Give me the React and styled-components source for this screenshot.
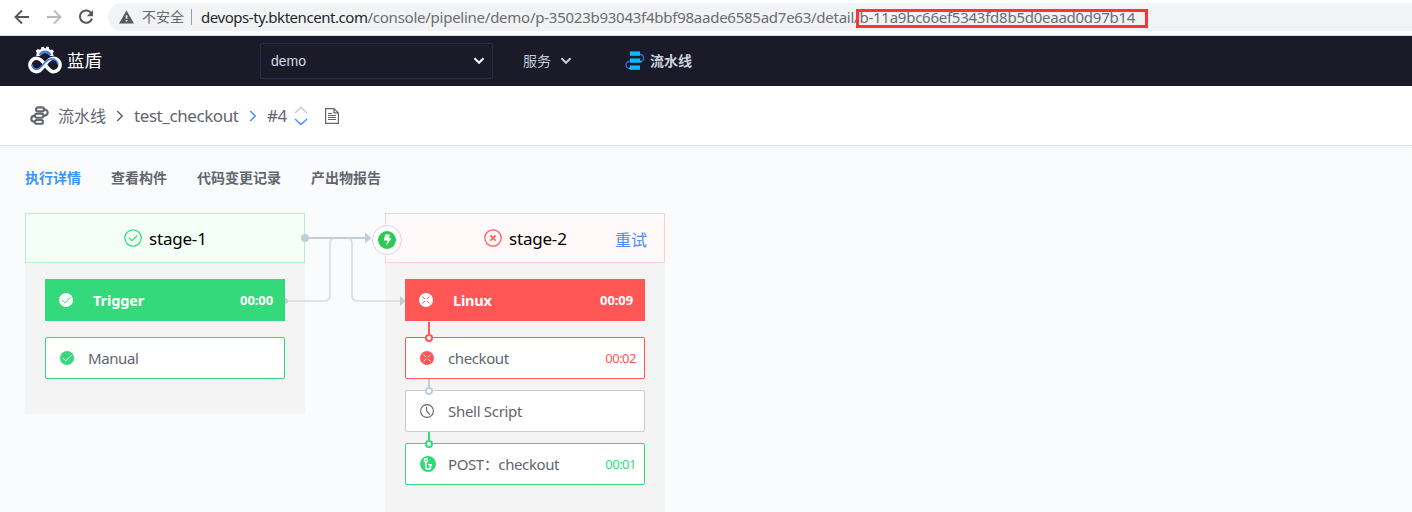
import React from "react";
import styled, { createGlobalStyle } from "styled-components";

const GREEN = "#34d97b";
const RED = "#ff5656";
const GREY = "#c3cdd7";

const Global = createGlobalStyle`
  *, *::before, *::after { box-sizing: border-box; }
  body {
    margin: 0;
    background: #fafbfd;
    overflow: hidden;
    font-family: "Noto Sans", "Noto Sans CJK SC", sans-serif;
    color: #63656e;
  }
`;

const Page = styled.div`
  width: 1412px;
  height: 512px;
  overflow: hidden;
`;

const Label = styled.span`
  font-size: ${(p) => p.$size || 14}px;
  font-weight: ${(p) => p.$weight || 400};
  letter-spacing: ${(p) => p.$track || 0}px;
  color: ${(p) => p.$color || "inherit"};
  line-height: 20px;
  white-space: nowrap;
`;

const BrowserBar = styled.div`
  display: flex;
  align-items: center;
  height: 36px;
  padding: 0 0 2px 14px;
  background: #fff;
  border-bottom: 1px solid #dcdde1;
`;

const BrowserButtons = styled.div`
  display: flex;
  gap: 16px;
  width: 94px;
`;

const Omnibox = styled.div`
  display: flex;
  flex: 1;
  align-items: center;
  height: 28px;
  padding-left: 11px;
  border-radius: 14px 0 0 14px;
  background: #f1f3f4;
`;

const Insecure = styled(Label)`
  width: 49px;
  margin-left: 8px;
`;

const Divider = styled.i`
  width: 1px;
  height: 16px;
  margin-right: 9px;
  background: #9b9da1;
`;

const Address = styled(Label)`
  color: #6b6d71;
  b {
    font-weight: 400;
    letter-spacing: -0.45px;
    color: #25272b;
  }
`;

const Highlight = styled.span`
  position: relative;
  &::after {
    content: "";
    position: absolute;
    left: -3px;
    top: 2px;
    width: 292px;
    height: 19px;
    border: 3px solid #f93535;
  }
`;

const NavBar = styled.header`
  display: flex;
  align-items: center;
  height: 50px;
  padding-left: 28px;
  background: #1b1a29;
`;

const Brand = styled.div`
  display: flex;
  align-items: center;
  gap: 5px;
  width: 232px;
  padding-bottom: 2px;
`;

const ProjectSelect = styled.div`
  display: flex;
  align-items: center;
  justify-content: space-between;
  width: 233px;
  height: 36px;
  padding: 0 7px 0 10px;
  border: 1px solid #2c2b45;
  border-radius: 2px;
  color: #d3d9e4;
  font-family: "Liberation Sans", sans-serif;
`;

const NavMenu = styled.div`
  display: flex;
  align-items: center;
  gap: 9px;
  width: 102px;
  margin-left: 30px;
  color: #c3cdd7;
`;

const NavProduct = styled.div`
  display: flex;
  align-items: center;
  gap: 5px;
  color: #c9d1dc;
`;

const Crumbs = styled.nav`
  display: flex;
  align-items: center;
  height: 60px;
  padding-left: 30px;
  background: #fff;
  border-bottom: 1px solid #dde0e7;
  box-shadow: 0 1px 4px rgba(50, 60, 90, 0.06);
`;

const CrumbText = styled(Label)`
  width: ${(p) => p.$w}px;
  margin-left: ${(p) => p.$gap}px;
`;

const CrumbArrow = styled.svg`
  width: 8px;
  height: 12px;
  margin-left: 10px;
`;

const Tabs = styled.div`
  display: flex;
  gap: 30px;
  height: 67px;
  padding: 22px 0 0 25px;
`;

const Tab = styled(Label)`
  font-weight: 700;
  color: ${(p) => (p.$active ? "#3a96ff" : "#63656e")};
`;

const Stages = styled.main`
  display: flex;
  align-items: flex-start;
  gap: 80px;
  padding-left: 25px;
`;

const Stage = styled.section`
  position: relative;
  width: 280px;
  height: ${(p) => p.$height}px;
  border-radius: 2px;
  background: #f4f4f4;
`;

const StageHead = styled.div`
  display: grid;
  grid-template-columns: 98px 1fr auto;
  align-items: center;
  height: 50px;
  padding-right: 17px;
  border: 1px solid ${(p) => (p.$failed ? "#ffcfcf" : "#b4efc9")};
  background: ${(p) => (p.$failed ? "#fff9f9" : "#f3fff7")};
`;

const StageTitle = styled.div`
  display: flex;
  grid-column: 2;
  align-items: center;
  gap: 7px;
`;

const StageName = styled(Label)`
  padding-top: 1px;
  color: #000;
`;

const Retry = styled(Label)`
  padding-top: 3px;
  color: #4a8cff;
`;

const StageBody = styled.div`
  display: flex;
  flex-direction: column;
  padding: 16px 20px;
`;

const Job = styled.div`
  display: flex;
  align-items: center;
  height: 42px;
  margin-bottom: 16px;
  padding: 0 12px 0 14px;
  background: ${(p) => p.$color};
  color: #fff;
`;

const Step = styled.div`
  position: relative;
  display: flex;
  align-items: center;
  height: 42px;
  margin-bottom: 11px;
  padding: 0 8px 0 14px;
  border: 1px solid ${(p) => p.$color};
  border-radius: 2px;
  background: #fff;
`;

const ItemName = styled(Label)`
  flex: 1;
  margin-left: ${(p) => p.$gap}px;
`;

const Link = styled.i`
  position: absolute;
  left: 22px;
  top: ${(p) => -p.$len}px;
  width: 2px;
  height: ${(p) => p.$len - 4}px;
  background: ${(p) => p.$color};
  &::after {
    content: "";
    position: absolute;
    left: -3px;
    bottom: -8px;
    width: 8px;
    height: 8px;
    border: 2px solid ${(p) => p.$color};
    border-radius: 50%;
    background: #fff;
  }
`;

const Wires = styled.svg`
  position: absolute;
  left: 260px;
  top: 17px;
  z-index: 1;
`;

const Gate = styled.div`
  position: absolute;
  left: -13px;
  top: 12px;
  z-index: 2;
  display: grid;
  place-items: center;
  width: 30px;
  height: 30px;
  border: 1px solid #d0d6e8;
  border-radius: 50%;
  background: #fff;
`;

const Chevron = ({ color }) => (
  <svg width="12" height="8" viewBox="0 0 12 8" fill="none" stroke={color} strokeWidth="2">
    <path d="M1.5 1.2 6 5.8l4.5-4.6" />
  </svg>
);

const Separator = ({ color }) => (
  <CrumbArrow viewBox="0 0 8 12" fill="none" stroke={color} strokeWidth="1.5">
    <path d="m1.2 1 5 5-5 5" />
  </CrumbArrow>
);

const RingMark = ({ failed }) => (
  <svg width="18" height="18" viewBox="0 0 18 18" fill="none" stroke={failed ? RED : GREEN} strokeWidth="1.2">
    <circle cx="9" cy="9" r="8.2" />
    {failed ? <path d="m6.4 6.4 5.2 5.2m0-5.2-5.2 5.2" strokeWidth="1.5" /> : <path d="m5 8.9 3 2.8 5.2-5.2" />}
  </svg>
);

const DiscMark = ({ fill, mark, failed }) => (
  <svg width="14" height="14" viewBox="0 0 14 14" fill="none">
    <circle cx="7" cy="7" r="7" fill={fill} />
    <path
      d={failed ? "m3.6 3.6 2.5 2.5m1.8 1.8 2.5 2.5m0-6.8-2.5 2.5M6.1 7.9l-2.5 2.5" : "m2.8 7 3 2.8 5.7-5.5"}
      stroke={mark}
      strokeWidth="1"
    />
  </svg>
);

const ClockMark = () => (
  <svg width="14" height="14" viewBox="0 0 14 14" fill="none" stroke="#63656e" strokeWidth="1.1">
    <circle cx="7" cy="7" r="6.4" />
    <path d="M6.6 2.8v4.3l3.2 3.4" />
  </svg>
);

const BranchMark = () => (
  <svg width="16" height="16" viewBox="0 0 16 16" fill="none" stroke="#fff" strokeWidth="1.6">
    <circle cx="8" cy="8" r="8" fill={GREEN} stroke="none" />
    <circle cx="5.9" cy="4.4" r="1.6" strokeWidth="1.4" />
    <path d="M5.9 6v5.3c0 2.5 4.5 2.5 4.6 0V8.2M8.4 8.8h3.4" />
  </svg>
);

const BackIcon = ({ color, forward }) => (
  <svg width="16" height="16" viewBox="0 0 16 16" fill="none" stroke={color} strokeWidth="1.9">
    <path d={forward ? "M1 8h13M8 1.5 14.5 8 8 14.5" : "M15 8H2M8 1.5 1.5 8 8 14.5"} />
  </svg>
);

const ReloadIcon = () => (
  <svg width="16" height="16" viewBox="0 0 16 16" fill="none">
    <path d="M13.3 4.2A6.2 6.2 0 1 0 14 9.6" stroke="#55585d" strokeWidth="2" />
    <path d="M15 1v6.2H8.8z" fill="#55585d" />
  </svg>
);

const WarningIcon = () => (
  <svg width="15" height="14" viewBox="0 0 15 14">
    <path d="M7.5.5 15 13.5H0z" fill="#55585d" />
    <path d="M6.7 5.3h1.7v3.5H6.7zm0 4.6h1.7v1.7H6.7z" fill="#f1f3f4" />
  </svg>
);

const LogoIcon = () => (
  <svg width="34" height="28" viewBox="0 0 34 28" fill="none">
    <path
      d="M8.2 10 8.8 6.6 7.6 4.9 9.8 3l1.7.8 1.6-.9.3-1.9 2.4-.3.7 1.5h1.2L18.600.5l2.4.6v2l1.5 1 1.9-.6 1.5 2.1-1.1 1.5.8 2.9z"
      fill="#fff"
    />
    <path d="M11.400 11.200a6 6 0 0 1 11.400 0z" fill="#1b1a29" />
    <path d="M11.800 9.200a5.800 5.800 0 0 1 10.600 0" stroke="#3a84e8" strokeWidth="2.400" />
    <path
      d="M17 18.500C14.500 21.800 12.600 25.700 8.600 25.700a6.700 6.700 0 0 1 0-13.400c3.600 0 5.900 2.900 8.400 6.200s4.800 7.200 8.400 7.200a6.700 6.700 0 0 0 0-13.400c-4 0-5.900 2.900-8.400 6.200z"
      stroke="#fff"
      strokeWidth="3.600"
    />
    <path
      d="M3.900 18.500c.2 4 4.400 6.400 8 3.400 3-2.500 5.600-7.200 9.500-8.500 4.200-1.400 8.200 1 8.600 5"
      stroke="#3a84e8"
      strokeWidth="1.700"
    />
  </svg>
);

const ProductIcon = () => (
  <svg width="20" height="20" viewBox="0 0 20 20" fill="none">
    <path d="M14 3.2c6 0 6.3 7.2 1 7.2M6 10.2c-6.500 0-6.500 7.300-1 7.300" stroke="#3763d6" strokeWidth="1.4" />
    <path d="M5 0h10v5H5zm0 7h10v5H5zm0 7h10v5H5z" fill="#0877ad" />
    <path d="M5 1h10v3.6H5zm0 7h10v3.4H5zm0 7h10v3.6H5z" fill="#12b8ff" />
    <path d="M15 10h1.3v1.500H15zM4 16.800h1.200v1.400H4z" fill="#37e6a0" />
  </svg>
);

const PipelineIcon = () => (
  <svg width="19" height="19" viewBox="0 0 19 19" fill="none" stroke="#63656e" strokeWidth="2.1">
    <rect x="6" y="1.400" width="8" height="4" rx="2" />
    <rect x="5" y="7.600" width="8.400" height="4.200" rx="2" />
    <rect x="5" y="14" width="8" height="3.800" rx="1.900" />
    <path d="M14 3.400c5 .2 5 6.200-.6 6.300M5 9.600c-5 .4-5 6 0 6.300" />
  </svg>
);

const BuildStepper = () => (
  <svg width="14" height="20" viewBox="0 0 14 20" fill="none" strokeWidth="1.5">
    <path d="m1 7 6-5.5L13 7" stroke="#c4cdd6" />
    <path d="m1 13 6 5.5 6-5.5" stroke="#4a8cff" />
  </svg>
);

const DocIcon = styled(({ className }) => (
  <svg className={className} width="14" height="16" viewBox="0 0 14 16" fill="none" stroke="#63656e">
    <path d="M.6.6H9l4.4 4.3v10.500H.6zM9 .6v4.3h4.4M3 5.500h4M3 7.500h8M3 9.500h8M3 11.500h8" strokeWidth="1.200" />
  </svg>
))`
  margin-left: 17px;
`;

const BoltIcon = () => (
  <svg width="18" height="18" viewBox="0 0 18 18">
    <circle cx="9" cy="9" r="9" fill="#2dcb56" />
    <path d="M7.2 3.6h4.6l-.8 3.700h2.400l-5.200 7.700 1-5.500H5.800z" fill="#fff" />
  </svg>
);

const Connector = () => (
  <Wires width="122" height="80" viewBox="0 0 122 80" fill="none">
    <path d="M2 71h38a5 5 0 0 0 5-5V13a5 5 0 0 1 5-5M62 8a5 5 0 0 1 5 5v53a5 5 0 0 0 5 5h43" stroke="#d5dce5" strokeWidth="1.7" />
    <path d="M20 8h61" stroke={GREY} strokeWidth="2" />
    <circle cx="20" cy="8" r="4" fill={GREY} />
    <path d="M80 2.500 86.500 8 80 13.500zM115 66l5.500 5-5.500 5z" fill={GREY} />
    <path d="M0 68a3 3 0 0 1 0 6z" fill={GREY} />
  </Wires>
);

export default function App() {
  return (
    <Page>
      <Global />
      <BrowserBar>
        <BrowserButtons>
          <BackIcon color="#55585d" />
          <BackIcon color="#b9bbbe" forward />
          <ReloadIcon />
        </BrowserButtons>
        <Omnibox>
          <WarningIcon />
          <Insecure $color="#66696e">不安全</Insecure>
          <Divider />
          <Address $size={15} $track={-0.25}>
            <b>devops-ty.bktencent.com</b>/console/pipeline/demo/p-35023b93043f4bbf98aade6585ad7e63/detail/
            <Highlight>b-11a9bc66ef5343fd8b5d0eaad0d97b14</Highlight>
          </Address>
        </Omnibox>
      </BrowserBar>

      <NavBar>
        <Brand>
          <LogoIcon />
          <Label $size={17.5} $color="#fff">蓝盾</Label>
        </Brand>
        <ProjectSelect>
          <Label>demo</Label>
          <Chevron color="#fff" />
        </ProjectSelect>
        <NavMenu>
          <Label>服务</Label>
          <Chevron color="#c3cdd7" />
        </NavMenu>
        <NavProduct>
          <ProductIcon />
          <Label $weight={700}>流水线</Label>
        </NavProduct>
      </NavBar>

      <Crumbs>
        <PipelineIcon />
        <CrumbText $size={16} $gap={9} $w={48}>流水线</CrumbText>
        <Separator color="#63656e" />
        <CrumbText $size={17} $track={-0.42} $gap={10} $w={105}>test_checkout</CrumbText>
        <Separator color="#4a8cff" />
        <CrumbText $size={17} $track={-0.6} $gap={10} $w={27}>#4</CrumbText>
        <BuildStepper />
        <DocIcon />
      </Crumbs>

      <Tabs>
        <Tab $active>执行详情</Tab>
        <Tab>查看构件</Tab>
        <Tab>代码变更记录</Tab>
        <Tab>产出物报告</Tab>
      </Tabs>

      <Stages>
        <Stage $height={201}>
          <StageHead>
            <StageTitle>
              <RingMark />
              <StageName $size={17} $track={-0.2}>stage-1</StageName>
            </StageTitle>
          </StageHead>
          <StageBody>
            <Job $color={GREEN}>
              <DiscMark fill="#fff" mark={GREEN} />
              <ItemName $gap={20} $size={14.5} $track={-0.1} $weight={700}>Trigger</ItemName>
              <Label $size={13} $track={-0.1} $weight={700}>00:00</Label>
            </Job>
            <Step $color={GREEN}>
              <DiscMark fill={GREEN} mark="#fff" />
              <ItemName $gap={14} $size={15} $track={-0.4}>Manual</ItemName>
            </Step>
          </StageBody>
          <Connector />
        </Stage>

        <Stage $height={320}>
          <StageHead $failed>
            <StageTitle>
              <RingMark failed />
              <StageName $size={17} $track={-0.2}>stage-2</StageName>
            </StageTitle>
            <Retry $size={16}>重试</Retry>
          </StageHead>
          <Gate>
            <BoltIcon />
          </Gate>
          <StageBody>
            <Job $color={RED}>
              <DiscMark fill="#fff" mark={RED} failed />
              <ItemName $gap={20} $size={14.5} $track={-0.2} $weight={700}>Linux</ItemName>
              <Label $size={13} $track={-0.1} $weight={700}>00:09</Label>
            </Job>
            <Step $color={RED}>
              <Link $color={RED} $len={16} />
              <DiscMark fill={RED} mark="#fff" failed />
              <ItemName $gap={14} $size={15} $track={-0.4}>checkout</ItemName>
              <Label $size={13} $track={-0.5} $color={RED}>00:02</Label>
            </Step>
            <Step $color={GREY}>
              <Link $color={GREY} $len={12} />
              <ClockMark />
              <ItemName $gap={14} $size={15} $track={-0.3}>Shell Script</ItemName>
            </Step>
            <Step $color={GREEN}>
              <Link $color={GREEN} $len={12} />
              <BranchMark />
              <ItemName $gap={12} $size={15} $track={-0.4}>POST：checkout</ItemName>
              <Label $size={13} $track={-0.5} $color={GREEN}>00:01</Label>
            </Step>
          </StageBody>
        </Stage>
      </Stages>
    </Page>
  );
}
